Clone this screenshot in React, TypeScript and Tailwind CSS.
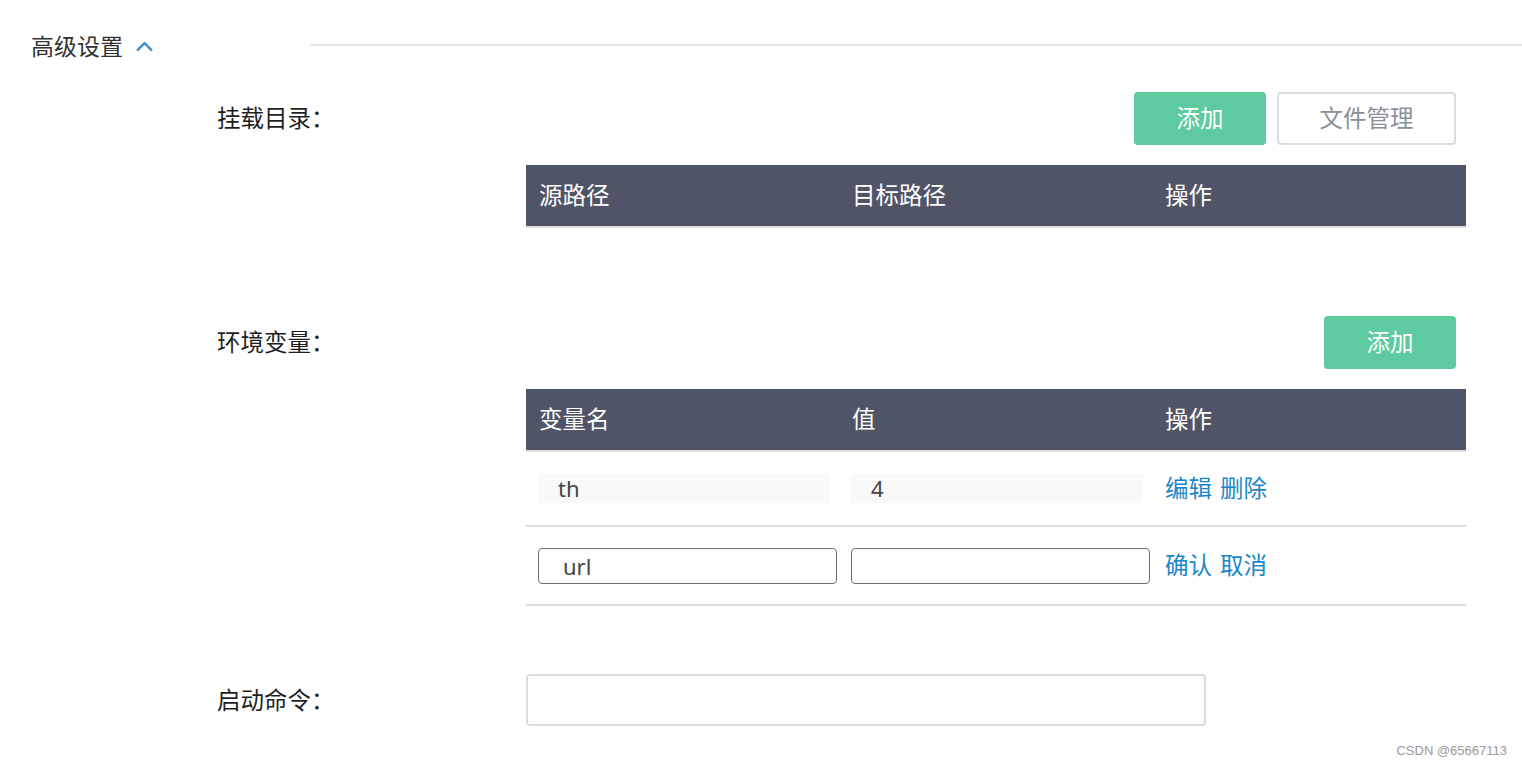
import { ChevronUp } from 'lucide-react';

const FONT = "font-['Noto_Sans','Noto_Sans_CJK_SC',sans-serif]";

function FormRow({ label, children }: { label: string; children: React.ReactNode }) {
  return (
    <div className="flex">
      <div className="w-[526px] pl-[217px] shrink-0">
        <div className="h-[53px] flex items-center text-[23.5px] text-[#1f1f1f]">{label}：</div>
      </div>
      <div className="w-[940px] shrink-0">{children}</div>
    </div>
  );
}

function TableHead({ cols }: { cols: string[] }) {
  return (
    <div className="grid grid-cols-[313px_313px_1fr] h-[63px] bg-[#4f5567] border-b-2 border-[#dcdcdc] text-white text-[23.5px]">
      {cols.map((c) => (
        <div key={c} className="pl-[13px] flex items-center">
          {c}
        </div>
      ))}
    </div>
  );
}

export default function App() {
  return (
    <div className={`relative w-[1522px] h-[766px] bg-white overflow-hidden ${FONT}`}>
      {/* Header */}
      <div className="flex items-center h-[92px]">
        <div className="pl-[31px] w-[310px] flex items-center gap-[8px] text-[23px] text-[#333]">
          <span>高级设置</span>
          <ChevronUp className="w-[27px] h-[27px] text-[#3f8fd0]" strokeWidth={2.2} />
        </div>
        <div className="flex-1 h-[2px] mb-[2px] bg-[#e6e6e6]" />
      </div>

      {/* Mount */}
      <FormRow label="挂载目录">
        <div className="flex justify-end gap-[11px] pr-[10px]">
          <button className="w-[132px] h-[53px] rounded-[4px] bg-[#5dcaa0] text-white text-[23.5px]">添加</button>
          <button className="w-[179px] h-[53px] rounded-[4px] border-2 border-[#dcdcdc] text-[#8a8f99] text-[23.5px]">
            文件管理
          </button>
        </div>
        <div className="mt-[20px]">
          <TableHead cols={['源路径', '目标路径', '操作']} />
        </div>
      </FormRow>

      {/* Env */}
      <div className="mt-[88px]">
        <FormRow label="环境变量">
          <div className="flex justify-end pr-[10px]">
            <button className="w-[132px] h-[53px] rounded-[4px] bg-[#5dcaa0] text-white text-[23.5px]">添加</button>
          </div>
          <div className="mt-[20px]">
            <TableHead cols={['变量名', '值', '操作']} />
            <div className="grid grid-cols-[313px_313px_1fr] h-[75px] border-b-2 border-[#dcdcdc] items-center">
              <div className="pl-[12px] pr-[9px]">
                <div className="h-[29px] bg-[#f9f9f9] pl-[20px] flex items-center text-[22px] text-[#444]">th</div>
              </div>
              <div className="pl-[12px] pr-[9px]">
                <div className="h-[29px] bg-[#f9f9f9] pl-[20px] flex items-center text-[22px] text-[#444]">4</div>
              </div>
              <div className="pl-[13px] text-[23.5px] text-[#1a87c9] flex gap-[8px]">
                <span>编辑</span>
                <span>删除</span>
              </div>
            </div>
            <div className="grid grid-cols-[313px_313px_1fr] h-[79px] border-b-2 border-[#dcdcdc] items-center">
              <div className="pl-[12px] pr-[2px]">
                <input
                  defaultValue="url"
                  className="w-full h-[36px] border border-[#6b6b6b] rounded-[4px] pl-[24px] text-[22px] text-[#444] outline-none"
                />
              </div>
              <div className="pl-[12px] pr-[2px]">
                <input className="w-full h-[36px] border border-[#6b6b6b] rounded-[4px] pl-[24px] text-[22px] text-[#444] outline-none" />
              </div>
              <div className="pl-[13px] text-[23.5px] text-[#1a87c9] flex gap-[8px]">
                <span>确认</span>
                <span>取消</span>
              </div>
            </div>
          </div>
        </FormRow>
      </div>

      {/* Command */}
      <div className="mt-[68px]">
        <FormRow label="启动命令">
          <input className="block w-[680px] h-[52px] border-2 border-[#dcdcdc] rounded-[4px] outline-none text-[20px] px-3" />
        </FormRow>
      </div>

      <div className="absolute right-[15px] bottom-[6px] text-[13px] text-[#9a9a9a] font-['Liberation_Sans',sans-serif]">
        CSDN @65667113
      </div>
    </div>
  );
}
